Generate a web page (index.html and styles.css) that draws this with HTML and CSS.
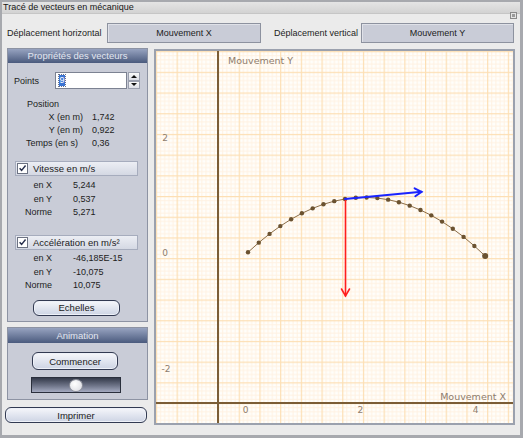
FILE: index.html
```html
<!DOCTYPE html>
<html lang="fr">
<head>
<meta charset="utf-8">
<title>Tracé de vecteurs en mécanique</title>
<link rel="stylesheet" href="styles.css">
</head>
<body>
<div class="window">
  <div class="titlebar">
    <span class="title">Tracé de vecteurs en mécanique</span>
    <span class="winicon"><span></span></span>
  </div>
  <div class="toprow">
    <span class="toplabel l1">Déplacement horizontal</span>
    <div class="modebox b1">Mouvement X</div>
    <span class="toplabel l2">Déplacement vertical</span>
    <div class="modebox b2">Mouvement Y</div>
  </div>
  <div class="main">
    <div class="leftcol">
      <section class="panel props">
        <div class="phead">Propriétés des vecteurs</div>
        <div class="pointsrow">
          <span class="plabel">Points</span>
          <div class="spinfield"><span class="sel">9</span></div>
          <div class="spinner"><span class="sbtn up"><i></i></span><span class="sbtn down"><i></i></span></div>
        </div>
        <div class="poslabel">Position</div>
        <div class="datagrid pos">
          <span class="k">X (en m)</span><span class="v">1,742</span>
          <span class="k">Y (en m)</span><span class="v">0,922</span>
          <span class="k k-temps">Temps (en s)</span><span class="v">0,36</span>
        </div>
        <div class="check c1">
          <span class="cb"><svg width="10" height="10" viewBox="0 0 10 10"><path d="M1.8 5.2 L4 7.6 L8.4 2.2" fill="none" stroke="#28304e" stroke-width="1.6"/></svg></span>
          <span class="ctext">Vitesse en m/s</span>
        </div>
        <div class="datagrid sub s1">
          <span class="k">en X</span><span class="v">5,244</span>
          <span class="k">en Y</span><span class="v">0,537</span>
          <span class="k">Norme</span><span class="v">5,271</span>
        </div>
        <div class="check c2">
          <span class="cb"><svg width="10" height="10" viewBox="0 0 10 10"><path d="M1.8 5.2 L4 7.6 L8.4 2.2" fill="none" stroke="#28304e" stroke-width="1.6"/></svg></span>
          <span class="ctext">Accélération en m/s²</span>
        </div>
        <div class="datagrid sub s2">
          <span class="k">en X</span><span class="v">-46,185E-15</span>
          <span class="k">en Y</span><span class="v">-10,075</span>
          <span class="k">Norme</span><span class="v">10,075</span>
        </div>
        <button class="btn echelles">Echelles</button>
      </section>
      <section class="panel anim">
        <div class="phead ahead">Animation</div>
        <button class="btn commencer">Commencer</button>
        <div class="slider"><span class="knob"></span></div>
      </section>
      <button class="btn print">Imprimer</button>
    </div>
    <div class="graph">
      <svg class="plot" width="357" height="372" viewBox="0 0 357 372">
        <defs>
          <pattern id="grid" patternUnits="userSpaceOnUse" x="62" y="352" width="20.7" height="20.7">
            <rect x="0" y="0" width="20.7" height="20.7" fill="#fffefb"/>
            <g fill="#fff2e2">
              <rect x="4.14" y="0" width="1" height="20.7"/>
              <rect x="8.28" y="0" width="1" height="20.7"/>
              <rect x="12.42" y="0" width="1" height="20.7"/>
              <rect x="16.56" y="0" width="1" height="20.7"/>
              <rect x="0" y="4.14" width="20.7" height="1"/>
              <rect x="0" y="8.28" width="20.7" height="1"/>
              <rect x="0" y="12.42" width="20.7" height="1"/>
              <rect x="0" y="16.56" width="20.7" height="1"/>
            </g>
            <g fill="#fddfb4">
              <rect x="0" y="0" width="1.2" height="20.7"/>
              <rect x="0" y="0" width="20.7" height="1.2"/>
            </g>
          </pattern>
        </defs>
        <rect x="0" y="0" width="357" height="372" fill="url(#grid)"/>
        <line x1="62" y1="0" x2="62" y2="372" stroke="#7b5d36" stroke-width="2"/>
        <line x1="0" y1="352" x2="357" y2="352" stroke="#7b5d36" stroke-width="2"/>
        <g font-family="DejaVu Sans, Verdana, sans-serif" font-size="9.5" fill="#8e7c6c">
          <text x="72" y="13">Mouvement Y</text>
          <text x="350" y="349" text-anchor="end">Mouvement X</text>
        </g>
        <g font-family="DejaVu Sans, Verdana, sans-serif" font-size="9" fill="#8e7c6c">
          <text x="9" y="90" text-anchor="middle">2</text>
          <text x="9" y="205" text-anchor="middle">0</text>
          <text x="10" y="321" text-anchor="middle">-2</text>
          <text x="89.5" y="362" text-anchor="middle">0</text>
          <text x="204.3" y="362" text-anchor="middle">2</text>
          <text x="319.7" y="362" text-anchor="middle">4</text>
        </g>
        <polyline fill="none" stroke="#8b6d47" stroke-width="1" points="92,201.3 102.78,191.63 113.56,182.9 124.34,175.1 135.12,168.24 145.9,162.32 156.68,157.33 167.46,153.28 178.24,150.17 189.02,148 199.8,146.76 210.58,146.46 221.36,147.1 232.14,148.67 242.92,151.18 253.7,154.63 264.48,159.01 275.26,164.33 286.04,170.59 296.82,177.79 307.6,185.92 318.38,194.99 329.16,205"/>
        <g fill="#6b5230">
          <circle cx="92" cy="201.3" r="2.2"/>
          <circle cx="102.78" cy="191.63" r="2.2"/>
          <circle cx="113.56" cy="182.9" r="2.2"/>
          <circle cx="124.34" cy="175.1" r="2.2"/>
          <circle cx="135.12" cy="168.24" r="2.2"/>
          <circle cx="145.9" cy="162.32" r="2.2"/>
          <circle cx="156.68" cy="157.33" r="2.2"/>
          <circle cx="167.46" cy="153.28" r="2.2"/>
          <circle cx="178.24" cy="150.17" r="2.2"/>
          <circle cx="189.02" cy="148" r="2.2"/>
          <circle cx="199.8" cy="146.76" r="2.2"/>
          <circle cx="210.58" cy="146.46" r="2.2"/>
          <circle cx="221.36" cy="147.1" r="2.2"/>
          <circle cx="232.14" cy="148.67" r="2.2"/>
          <circle cx="242.92" cy="151.18" r="2.2"/>
          <circle cx="253.7" cy="154.63" r="2.2"/>
          <circle cx="264.48" cy="159.01" r="2.2"/>
          <circle cx="275.26" cy="164.33" r="2.2"/>
          <circle cx="286.04" cy="170.59" r="2.2"/>
          <circle cx="296.82" cy="177.79" r="2.2"/>
          <circle cx="307.6" cy="185.92" r="2.2"/>
          <circle cx="318.38" cy="194.99" r="2.2"/>
          <circle cx="329.16" cy="205" r="3"/>
        </g>
        <g stroke="#ff1f1f" stroke-width="1.6" fill="none" stroke-linecap="round">
          <line x1="189.5" y1="148" x2="189.5" y2="245"/>
          <polyline points="185.5,238 189.5,245 193.5,238"/>
        </g>
        <g stroke="#1a24ff" stroke-width="2" fill="none" stroke-linecap="round">
          <line x1="189" y1="148" x2="265.5" y2="140.8"/>
          <polyline points="258.6,137.3 265.5,140.8 259.3,145.2"/>
        </g>
      </svg>
    </div>
  </div>
</div>
</body>
</html>
```
FILE: styles.css
```css
* { box-sizing: border-box; }
html, body { margin: 0; padding: 0; background: #ffffff; }
body {
  font-family: "Liberation Sans", Arial, sans-serif;
  font-size: 9px;
  color: #1c1c1c;
}
.window {
  width: 523px;
  height: 438px;
  border: 2px solid #a7a9ae;
  border-right-width: 3px;
  border-bottom-width: 3px;
  background: #ebebeb;
  display: flex;
  flex-direction: column;
}
.titlebar {
  height: 12px;
  flex: none;
  display: flex;
  align-items: flex-start;
  background: linear-gradient(#e4e4e4, #d3d3d3);
  border-bottom: 1px solid #c6c6c6;
  overflow: visible;
}
.title {
  padding-left: 1px;
  line-height: 11px;
  color: #161616;
}
.winicon {
  margin-left: auto;
  margin-right: 3px;
  margin-top: 10px;
  width: 7px;
  height: 7px;
  border: 1px solid #8a8a8a;
  background: #e4e4e4;
  display: flex;
  align-items: center;
  justify-content: center;
  flex: none;
}
.winicon span {
  width: 3px;
  height: 3px;
  background: #9a9a9a;
}
.toprow {
  margin-top: 9px;
  height: 20px;
  flex: none;
  display: flex;
  align-items: center;
  padding-left: 5px;
}
.toplabel { line-height: 20px; white-space: nowrap; }
.l1 { width: 100px; }
.l2 { width: 87px; margin-left: 13px; }
.modebox {
  height: 20px;
  background: #c9ccd7;
  border: 1px solid #8d929f;
  box-shadow: inset 1px 1px 0 #dfe1e8;
  display: flex;
  align-items: center;
  justify-content: center;
}
.b1 { width: 154px; }
.b2 { width: 153px; }
.main {
  margin-top: 5px;
  display: flex;
  padding-left: 3px;
}
.leftcol {
  width: 143px;
  flex: none;
  display: flex;
  flex-direction: column;
}
.panel {
  margin-left: 2px;
  width: 141px;
  background: #c9ccd7;
  border: 1px solid #8d93a3;
  display: flex;
  flex-direction: column;
}
.props { height: 274px; }
.phead {
  height: 14px;
  flex: none;
  background: linear-gradient(#97a3c0, #4a5a7d);
  color: #e2e6f0;
  text-align: center;
  line-height: 14px;
  font-size: 9.5px;
}
.ahead { height: 15px; line-height: 15px; }
.pointsrow {
  margin-top: 9px;
  height: 17px;
  display: flex;
  align-items: center;
  padding-left: 6px;
}
.plabel { width: 41px; }
.spinfield {
  width: 72px;
  height: 17px;
  background: #ffffff;
  border: 1px solid #7c8292;
  display: flex;
  align-items: center;
  padding-left: 3px;
}
.sel {
  background: #3a74d4;
  color: #ffffff;
  width: 6px;
  height: 11px;
  line-height: 11px;
  text-align: center;
  outline: 1px dotted #6a7088;
}
.spinner {
  margin-left: 1px;
  width: 12px;
  height: 17px;
  display: flex;
  flex-direction: column;
}
.sbtn {
  flex: 1;
  background: linear-gradient(#fafafa, #dcdee6);
  border: 1px solid #9a9fae;
  display: flex;
  align-items: center;
  justify-content: center;
}
.sbtn i {
  width: 0;
  height: 0;
  border-left: 3px solid transparent;
  border-right: 3px solid transparent;
}
.up i { border-bottom: 3px solid #111; }
.down i { border-top: 3px solid #111; }
.poslabel {
  margin-top: 8.5px;
  line-height: 13.33px;
  padding-left: 19px;
}
.datagrid {
  display: grid;
  white-space: nowrap;
}
.pos {
  grid-template-columns: 75px auto;
  column-gap: 9px;
  line-height: 13.33px;
}
.k { text-align: right; }
.k-temps { padding-right: 5px; }
.check {
  margin-left: 7px;
  width: 123px;
  height: 15px;
  background: linear-gradient(#eceef4, #d4d8e3);
  border: 1px solid #a6acbd;
  display: flex;
  align-items: center;
  padding-left: 1px;
  font-size: 9.5px;
}
.c1 { margin-top: 10.17px; }
.c2 { margin-top: 15.25px; }
.cb {
  width: 11px;
  height: 11px;
  background: #ffffff;
  border: 1px solid #6c7282;
  display: flex;
  align-items: center;
  justify-content: center;
  flex: none;
}
.cb svg { display: block; }
.ctext { margin-left: 5px; }
.sub {
  grid-template-columns: 44px auto;
  column-gap: 21px;
  line-height: 13.5px;
}
.s1 { margin-top: 3.25px; }
.s2 { margin-top: 2.25px; }
.btn {
  display: flex;
  align-items: center;
  justify-content: center;
  font-family: "Liberation Sans", Arial, sans-serif;
  font-size: 9.5px;
  color: #1a1a1a;
  padding: 0;
  border: 1px solid #323a52;
  border-radius: 6px;
  background: linear-gradient(#f6f7fb, #cdd4e4);
  box-shadow: inset 0 0 0 1px #eef1f8;
}
.echelles {
  margin-top: 7.25px;
  margin-left: 25px;
  width: 87px;
  height: 16px;
}
.anim {
  margin-top: 5px;
  height: 73px;
}
.commencer {
  margin-top: 9px;
  margin-left: 24px;
  width: 86px;
  height: 18px;
}
.slider {
  margin-top: 7px;
  margin-left: 23px;
  width: 90px;
  height: 16px;
  border: 1px solid #2a2f3c;
  background: linear-gradient(#343a4a, #6e7488 55%, #a4aac0);
  display: flex;
  align-items: center;
  justify-content: center;
}
.knob {
  width: 14px;
  height: 13px;
  border-radius: 50%;
  border: 1px solid #8c8f9a;
  background: radial-gradient(circle at 40% 35%, #ffffff, #d8d9e0);
}
.print {
  margin-top: 7px;
  width: 142px;
  height: 16px;
}
.graph {
  margin-left: 6px;
  margin-top: 1px;
  width: 361px;
  height: 376px;
  border: 2px solid #9ba1ae;
  flex: none;
  background: #fffefb;
}
.plot { display: block; }
```
